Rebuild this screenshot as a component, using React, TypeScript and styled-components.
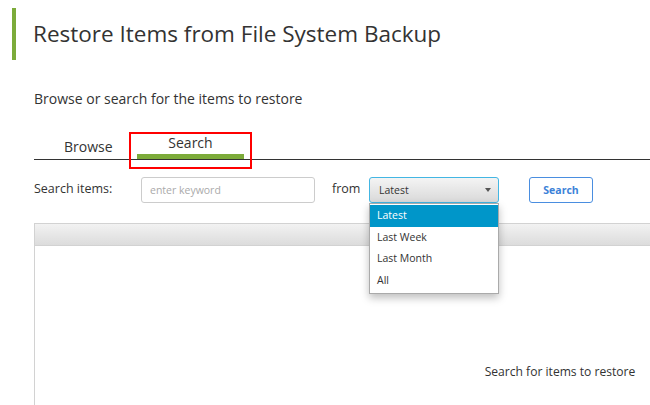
import styled, { createGlobalStyle } from "styled-components";

const GlobalStyle = createGlobalStyle`
  html, body {
    margin: 0;
    padding: 0;
    background: #fff;
  }
  body {
    font-family: "Open Sans", "Noto Sans", sans-serif;
    color: #333;
  }
`;

const Page = styled.div`
  position: relative;
  width: 650px;
  height: 405px;
  overflow: hidden;
`;

const Header = styled.header`
  display: flex;
  align-items: center;
  height: 52px;
  margin-top: 8px;
  padding-left: 12px;
`;

const Bar = styled.div`
  width: 4px;
  height: 100%;
  background: #7cab3a;
  margin-right: 17px;
`;

const Title = styled.h1`
  margin: 0 0 2px;
  font-size: 22.5px;
  font-weight: 400;
  color: #333;
`;

const Content = styled.div`
  padding-left: 34px;
`;

const Intro = styled.p`
  margin: 29px 0 0;
  font-size: 14px;
  line-height: 19px;
  color: #333;
`;

const TabBar = styled.div`
  position: relative;
  display: flex;
  align-items: flex-end;
  margin-top: 25px;
  border-bottom: 1px solid #333;
`;

const Tab = styled.div<{ $active?: boolean; $width: number }>`
  width: ${(p) => p.$width}px;
  font-size: 14px;
  line-height: 19px;
  color: #333;
  box-sizing: border-box;
  text-align: ${(p) => (p.$active ? "center" : "left")};
  padding-left: ${(p) => (p.$active ? 0 : 30)}px;
  padding-bottom: ${(p) => (p.$active ? 2 : 3)}px;
  border-bottom: ${(p) => (p.$active ? "5px solid #7cab3a" : "none")};
`;

const Highlight = styled.div`
  position: absolute;
  left: 95px;
  top: -1px;
  width: 119px;
  height: 33px;
  border: 2px solid #f00;
  pointer-events: none;
`;

const Form = styled.div`
  position: relative;
  display: flex;
  align-items: center;
  height: 26px;
  margin-top: 17px;
`;

const Label = styled.span<{ $width: number }>`
  width: ${(p) => p.$width}px;
  font-size: 12.5px;
  color: #333;
  padding-bottom: 4px;
`;

const Input = styled.input`
  box-sizing: border-box;
  width: 174px;
  height: 26px;
  margin-right: 17px;
  border: 1px solid #ccc;
  border-radius: 3px;
  padding: 0 8px;
  font-family: inherit;
  font-size: 10.5px;
  color: #333;
  &::placeholder {
    color: #aaa;
  }
`;

const SelectBox = styled.div`
  position: relative;
  box-sizing: border-box;
  width: 130px;
  height: 26px;
  display: flex;
  align-items: center;
  justify-content: space-between;
  padding: 0 7px 0 9px;
  border: 1px solid #43b6e3;
  border-radius: 3px;
  background: linear-gradient(#f4f4f4, #d9d9d9);
  font-size: 10.5px;
  color: #333;
  margin-right: 30px;
`;

const Caret = styled.span`
  width: 0;
  height: 0;
  border-left: 3.5px solid transparent;
  border-right: 3.5px solid transparent;
  border-top: 4px solid #555;
`;

const Menu = styled.ul`
  position: absolute;
  left: -1px;
  top: 25px;
  width: 130px;
  margin: 0;
  padding: 1px 0 2px;
  list-style: none;
  background: #fff;
  border: 1px solid #aaa;
  box-sizing: border-box;
  box-shadow: 0 4px 8px rgba(0, 0, 0, 0.25);
  z-index: 2;
`;

const MenuItem = styled.li<{ $selected?: boolean }>`
  height: 21.5px;
  line-height: 21.5px;
  padding-left: 7px;
  font-size: 10.5px;
  color: ${(p) => (p.$selected ? "#fff" : "#333")};
  background: ${(p) => (p.$selected ? "#0096c9" : "transparent")};
`;

const Button = styled.button`
  box-sizing: border-box;
  width: 64px;
  height: 26px;
  border: 1.5px solid #4a8ee0;
  border-radius: 3px;
  background: #fff;
  color: #3c82d8;
  font-family: inherit;
  font-size: 10.5px;
  font-weight: 700;
`;

const Grid = styled.div`
  width: 1050px;
  margin-top: 20px;
  border: 1px solid #d2d2d2;
`;

const GridHead = styled.div`
  height: 21px;
  background: linear-gradient(#f2f2f2, #dcdcdc);
  border-bottom: 1px solid #d2d2d2;
`;

const GridBody = styled.div`
  height: 250px;
  display: flex;
  align-items: center;
  justify-content: center;
  padding-bottom: 4px;
  font-size: 12.1px;
  color: #333;
`;

const options = ["Latest", "Last Week", "Last Month", "All"];

export default function App() {
  return (
    <Page>
      <GlobalStyle />
      <Header>
        <Bar />
        <Title>Restore Items from File System Backup</Title>
      </Header>
      <Content>
        <Intro>Browse or search for the items to restore</Intro>
        <TabBar>
          <Tab $width={103}>Browse</Tab>
          <Tab $width={107} $active>
            Search
          </Tab>
          <Highlight />
        </TabBar>
        <Form>
          <Label $width={107}>Search items:</Label>
          <Input placeholder="enter keyword" />
          <Label $width={37}>from</Label>
          <SelectBox>
            Latest
            <Caret />
            <Menu>
              {options.map((o, i) => (
                <MenuItem key={o} $selected={i === 0}>
                  {o}
                </MenuItem>
              ))}
            </Menu>
          </SelectBox>
          <Button>Search</Button>
        </Form>
        <Grid>
          <GridHead />
          <GridBody>Search for items to restore</GridBody>
        </Grid>
      </Content>
    </Page>
  );
}
